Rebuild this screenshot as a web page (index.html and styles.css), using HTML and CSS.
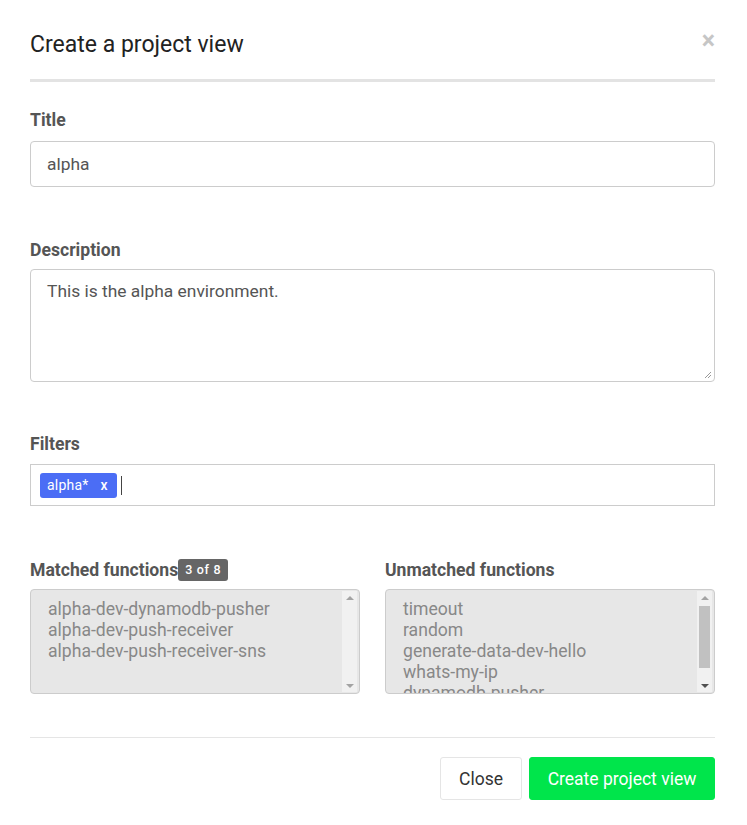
FILE: index.html
```html
<!DOCTYPE html>
<html>
<head>
<meta charset="utf-8">
<link rel="stylesheet" href="styles.css">
</head>
<body>
<div class="modal">
  <div class="header">
    <h1 class="title">Create a project view</h1>
    <span class="close-x">×</span>
  </div>

  <div class="field field-title">
    <label class="label">Title</label>
    <div class="input">alpha</div>
  </div>

  <div class="field field-desc">
    <label class="label">Description</label>
    <div class="textarea">This is the alpha environment.
      <svg class="grip" width="8" height="8" viewBox="0 0 8 8"><path d="M7 1 L1 7 M7 4 L4 7" stroke="#999" stroke-width="1"/></svg>
    </div>
  </div>

  <div class="field field-filters">
    <label class="label">Filters</label>
    <div class="tags">
      <span class="tag">alpha* <span class="tag-x">x</span></span>
      <span class="caret"></span>
    </div>
  </div>

  <div class="lists">
    <div class="col">
      <div class="label label-row">Matched functions<span class="badge">3 of 8</span></div>
      <div class="listbox">
        <div class="items">
          <div>alpha-dev-dynamodb-pusher</div>
          <div>alpha-dev-push-receiver</div>
          <div>alpha-dev-push-receiver-sns</div>
        </div>
        <div class="sbar">
          <span class="arr up"></span>
          <span class="arr down light"></span>
        </div>
      </div>
    </div>
    <div class="col">
      <div class="label label-row">Unmatched functions</div>
      <div class="listbox">
        <div class="items">
          <div>timeout</div>
          <div>random</div>
          <div>generate-data-dev-hello</div>
          <div>whats-my-ip</div>
          <div>dynamodb-pusher</div>
        </div>
        <div class="sbar">
          <span class="arr up"></span>
          <span class="thumb"></span>
          <span class="arr down"></span>
        </div>
      </div>
    </div>
  </div>

  <div class="footer">
    <button class="btn btn-close">Close</button>
    <button class="btn btn-primary">Create project view</button>
  </div>
</div>
</body>
</html>
```

FILE: styles.css
```css
* { box-sizing: border-box; }
html, body { margin: 0; padding: 0; background: #fff; }
body { font-family: Roboto, "Noto Sans", "Liberation Sans", sans-serif; color: #555; }

.modal { padding: 0 32px 0 30px; width: 747px; }

.header {
  display: flex; justify-content: space-between; align-items: flex-start;
  padding-top: 30px; height: 82px;
  border-bottom: 3px solid #e3e3e3;
}
.title { margin: 0; font-size: 23px; line-height: 30px; font-weight: 400; color: #222; }
.close-x { font-size: 25px; line-height: 20px; font-weight: 700; color: #c6c6c6; margin-top: 1px; margin-right: 0; }

.label { display: block; font-size: 17.6px; line-height: 20px; font-weight: 700; color: #555; }

.field-title { margin-top: 28px; }
.field-title .label { margin-bottom: 11px; }
.input {
  height: 46px; border: 1px solid #ccc; border-radius: 4px;
  padding: 0 16px; font-size: 17.4px; line-height: 44px; color: #555;
}

.field-desc { margin-top: 53px; }
.field-desc .label { margin-bottom: 9px; }
.textarea {
  position: relative;
  height: 113px; border: 1px solid #ccc; border-radius: 4px;
  padding: 11px 16px; font-size: 17.4px; line-height: 21px; color: #555;
}
.grip { position: absolute; right: 2px; bottom: 2px; }

.field-filters { margin-top: 52px; }
.field-filters .label { margin-bottom: 10px; }
.tags {
  height: 42px; border: 1px solid #ccc;
  padding: 7px 9px; display: flex; align-items: center; gap: 4px;
}
.tag {
  background: #4b6df5; color: #fff; border-radius: 3px;
  font-size: 14px; line-height: 25px; height: 25px; padding: 0 9px 0 7px;
  display: inline-flex; align-items: center; letter-spacing: 0.2px;
}
.tag-x { margin-left: 12px; font-weight: 500; }
.caret { width: 1px; height: 19px; background: #444; }

.lists { display: grid; grid-template-columns: 1fr 1fr; gap: 25px; margin-top: 52px; }
.label-row { display: flex; align-items: center; height: 23px; margin-bottom: 8px; }
.badge {
  background: #666; color: #fff; font-size: 12.5px; font-weight: 500;
  border-radius: 3px; height: 22px; line-height: 22px; padding: 0 7px;
  margin-left: 0; letter-spacing: 0.7px;
}
.listbox {
  height: 105px; border: 1px solid #ccc; border-radius: 4px;
  background: #e7e7e7; display: flex; overflow: hidden;
}
.items { flex: 1; padding: 9px 17px 0; font-size: 17.6px; line-height: 21px; color: #888; overflow: hidden; white-space: nowrap; }
.sbar {
  width: 15px; background: #f1f1f1; margin: 1px 2px 1px 0;
  display: flex; flex-direction: column; align-items: center;
  padding: 5px 0 4px;
}
.arr { width: 0; height: 0; border-left: 4px solid transparent; border-right: 4px solid transparent; }
.arr.up { border-bottom: 4px solid #a3a3a3; }
.arr.down { border-top: 4px solid #505050; margin-top: auto; }
.arr.down.light { border-top-color: #a3a3a3; }
.thumb { width: 11px; height: 62px; background: #c1c1c1; margin-top: 6px; }

.footer {
  margin-top: 43px; border-top: 1px solid #e5e5e5;
  padding-top: 19px; display: flex; justify-content: flex-end; gap: 7px;
}
.btn {
  height: 43px; font-family: Roboto, "Noto Sans", "Liberation Sans", sans-serif;
  font-size: 17.5px; border-radius: 3px; padding: 0 10px; cursor: pointer;
}
.btn-close { background: #fff; border: 1px solid #e5e5e5; color: #333; width: 82px; }
.btn-primary { background: #00e54b; border: 1px solid #00e54b; color: #fff; width: 186px; }
```
